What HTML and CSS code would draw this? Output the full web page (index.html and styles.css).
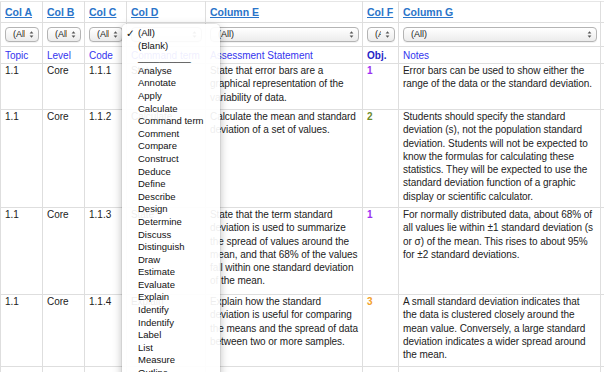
FILE: index.html
```html
<!DOCTYPE html>
<html>
<head>
<meta charset="utf-8">
<link rel="stylesheet" href="styles.css">
</head>
<body>
<div class="sheet">
<table class="grid">
<colgroup>
<col class="ca"><col class="cb"><col class="cc"><col class="cd"><col class="ce"><col class="cf"><col class="cg"><col class="ch">
</colgroup>
<thead>
<tr class="hdr">
<th><a href="#">Col A</a></th>
<th><a href="#">Col B</a></th>
<th><a href="#">Col C</a></th>
<th><a href="#">Col D</a></th>
<th><a href="#">Column E</a></th>
<th><a href="#">Col F</a></th>
<th><a href="#">Column G</a></th>
<th><a href="#">Col H</a></th>
</tr>
<tr class="flt">
<td><div class="sel"><span>(All)</span><svg class="arr" viewBox="0 0 5 9" width="5" height="9"><path d="M0.6 3.6L2.5 1.2L4.4 3.6Z M0.6 5.4L2.5 7.8L4.4 5.4Z"/></svg></div></td>
<td><div class="sel"><span>(All)</span><svg class="arr" viewBox="0 0 5 9" width="5" height="9"><path d="M0.6 3.6L2.5 1.2L4.4 3.6Z M0.6 5.4L2.5 7.8L4.4 5.4Z"/></svg></div></td>
<td><div class="sel"><span>(All)</span><svg class="arr" viewBox="0 0 5 9" width="5" height="9"><path d="M0.6 3.6L2.5 1.2L4.4 3.6Z M0.6 5.4L2.5 7.8L4.4 5.4Z"/></svg></div></td>
<td><div class="sel"><span>(All)</span><svg class="arr" viewBox="0 0 5 9" width="5" height="9"><path d="M0.6 3.6L2.5 1.2L4.4 3.6Z M0.6 5.4L2.5 7.8L4.4 5.4Z"/></svg></div></td>
<td><div class="sel"><span>(All)</span><svg class="arr" viewBox="0 0 5 9" width="5" height="9"><path d="M0.6 3.6L2.5 1.2L4.4 3.6Z M0.6 5.4L2.5 7.8L4.4 5.4Z"/></svg></div></td>
<td><div class="sel"><span>(All)</span><svg class="arr" viewBox="0 0 5 9" width="5" height="9"><path d="M0.6 3.6L2.5 1.2L4.4 3.6Z M0.6 5.4L2.5 7.8L4.4 5.4Z"/></svg></div></td>
<td><div class="sel"><span>(All)</span><svg class="arr" viewBox="0 0 5 9" width="5" height="9"><path d="M0.6 3.6L2.5 1.2L4.4 3.6Z M0.6 5.4L2.5 7.8L4.4 5.4Z"/></svg></div></td>
<td><div class="sel"><span>(All)</span><svg class="arr" viewBox="0 0 5 9" width="5" height="9"><path d="M0.6 3.6L2.5 1.2L4.4 3.6Z M0.6 5.4L2.5 7.8L4.4 5.4Z"/></svg></div></td>
</tr>
<tr class="lbl">
<td>Topic</td>
<td>Level</td>
<td>Code</td>
<td>Command term</td>
<td>Assessment Statement</td>
<td class="b">Obj.</td>
<td>Notes</td>
<td>Teacher notes</td>
</tr>
</thead>
<tbody>
<tr class="r1">
<td class="plain">1.1</td>
<td class="plain">Core</td>
<td class="plain">1.1.1</td>
<td>State</td>
<td>State that error bars are a<br>graphical representation of the<br>variability of data.</td>
<td class="obj o1">1</td>
<td>Error bars can be used to show either the<br>range of the data or the standard deviation.</td>
<td></td>
</tr>
<tr class="r2">
<td class="plain">1.1</td>
<td class="plain">Core</td>
<td class="plain">1.1.2</td>
<td>Calculate</td>
<td>Calculate the mean and standard<br>deviation of a set of values.</td>
<td class="obj o2">2</td>
<td>Students should specify the standard<br>deviation (s), not the population standard<br>deviation. Students will not be expected to<br>know the formulas for calculating these<br>statistics. They will be expected to use the<br>standard deviation function of a graphic<br>display or scientific calculator.</td>
<td></td>
</tr>
<tr class="r3">
<td class="plain">1.1</td>
<td class="plain">Core</td>
<td class="plain">1.1.3</td>
<td>State</td>
<td>State that the term standard<br>deviation is used to summarize<br>the spread of values around the<br>mean, and that 68% of the values<br>fall within one standard deviation<br>of the mean.</td>
<td class="obj o1">1</td>
<td>For normally distributed data, about 68% of<br>all values lie within ±1 standard deviation (s<br>or σ) of the mean. This rises to about 95%<br>for ±2 standard deviations.</td>
<td></td>
</tr>
<tr class="r4">
<td class="plain">1.1</td>
<td class="plain">Core</td>
<td class="plain">1.1.4</td>
<td>Explain</td>
<td>Explain how the standard<br>deviation is useful for comparing<br>the means and the spread of data<br>between two or more samples.</td>
<td class="obj o3">3</td>
<td>A small standard deviation indicates that<br>the data is clustered closely around the<br>mean value. Conversely, a large standard<br>deviation indicates a wider spread around<br>the mean.</td>
<td></td>
</tr>
<tr class="r5">
<td></td><td></td><td></td><td></td><td></td><td></td><td></td><td></td>
</tr>
</tbody>
</table>
</div>

<ul class="menu">
<li><span class="chk">✓</span>(All)</li>
<li>(Blank)</li>
<li>__________</li>
<li>Analyse</li>
<li>Annotate</li>
<li>Apply</li>
<li>Calculate</li>
<li>Command term</li>
<li>Comment</li>
<li>Compare</li>
<li>Construct</li>
<li>Deduce</li>
<li>Define</li>
<li>Describe</li>
<li>Design</li>
<li>Determine</li>
<li>Discuss</li>
<li>Distinguish</li>
<li>Draw</li>
<li>Estimate</li>
<li>Evaluate</li>
<li>Explain</li>
<li>Identify</li>
<li>Indentify</li>
<li>Label</li>
<li>List</li>
<li>Measure</li>
<li>Outline</li>
<li>Predict</li>
</ul>
</body>
</html>
```

FILE: styles.css
```css
html, body {
  margin: 0;
  padding: 0;
}
body {
  width: 604px;
  height: 372px;
  overflow: hidden;
  position: relative;
  background: #fff;
  font-family: "Liberation Sans", Arial, sans-serif;
  color: #222;
}
.sheet {
  padding-top: 1px;
}
.grid {
  border-collapse: collapse;
  table-layout: fixed;
  width: 703px;
}
.ca { width: 42px; }
.cb { width: 42px; }
.cc { width: 42px; }
.cd { width: 79px; }
.ce { width: 157px; }
.cf { width: 36px; }
.cg { width: 202px; }
.ch { width: 103px; }

.grid th,
.grid td {
  border: 1px solid #dedede;
  padding: 0 3px 0 4px;
  text-align: left;
  vertical-align: top;
  white-space: nowrap;
  overflow: hidden;
}
.grid tr:first-child th { border-top-color: #e6e6e6; }

.hdr { height: 21px; }
.hdr th {
  vertical-align: middle;
  font-size: 10.5px;
  font-weight: bold;
}
.hdr a {
  color: #2a74c9;
  text-decoration: underline;
}

.flt { height: 24px; }
.flt td {
  vertical-align: middle;
  padding: 0 3px 0 4px;
}
.sel {
  position: relative;
  height: 13px;
  border: 1px solid #b4b4b4;
  border-radius: 4px;
  background: linear-gradient(#ffffff, #ececec);
  box-shadow: 0 1px 0 rgba(0,0,0,0.05);
  padding: 0 13px 0 7px;
  overflow: hidden;
  font-size: 9px;
  line-height: 13px;
  color: #222;
}
.sel span {
  display: block;
  overflow: hidden;
}
.arr {
  position: absolute;
  right: 4px;
  top: 2px;
  fill: #555;
}

.lbl { height: 17px; }
.lbl td {
  vertical-align: middle;
  font-size: 10px;
  color: #3434ee;
}
.lbl td.b {
  font-weight: bold;
  color: #2525c6;
}

tbody td {
  font-size: 10px;
  letter-spacing: -0.05px;
  line-height: 13.3px;
  padding-top: 3px;
  color: #222;
}
tbody td.plain {
  letter-spacing: 0;
}
.obj {
  font-weight: bold;
  letter-spacing: 0;
}
.o1 { color: #9b30f2; }
.o2 { color: #6d8a2a; }
.o3 { color: #f2a12a; }

.r1 { height: 46px; }
.r2 { height: 98px; }
.r3 { height: 87px; }
.r4 { height: 72px; }
.r5 { height: 40px; }

.menu {
  position: absolute;
  left: 122px;
  top: 24px;
  width: 98px;
  height: 380px;
  margin: 0;
  padding: 3px 0 0 0;
  list-style: none;
  background: rgba(255,255,255,0.92);
  border-radius: 5px;
  box-shadow: 0 3px 10px rgba(0,0,0,0.28), 0 0 0 1px rgba(0,0,0,0.05);
  font-size: 9.5px;
  color: #111;
}
.menu li {
  position: relative;
  height: 12.6px;
  line-height: 12.6px;
  padding-left: 16px;
  white-space: nowrap;
}
.chk {
  position: absolute;
  left: 4px;
  top: 0;
  font-family: "DejaVu Sans", sans-serif;
  font-weight: bold;
  font-size: 10.5px;
}
```
